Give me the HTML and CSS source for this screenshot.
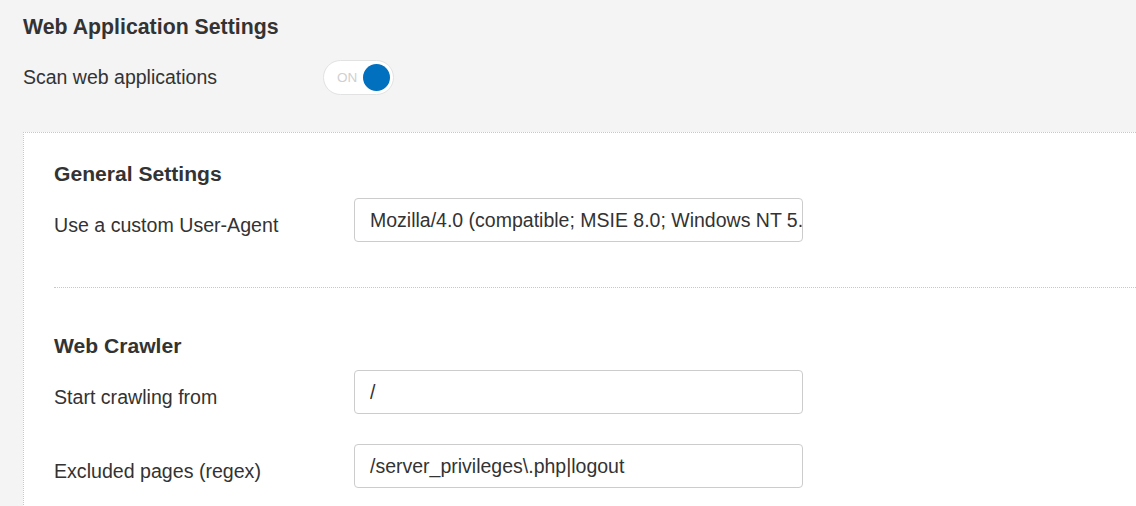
FILE: index.html
```html
<!DOCTYPE html>
<html>
<head>
<meta charset="utf-8">
<link rel="stylesheet" href="styles.css">
</head>
<body>
<div class="page">
  <h1 class="title">Web Application Settings</h1>
  <div class="toggle-row">
    <span class="label">Scan web applications</span>
    <span class="toggle"><span class="toggle-text">ON</span><span class="knob"></span></span>
  </div>
  <div class="card">
    <h2 class="section-title">General Settings</h2>
    <div class="form-row">
      <label class="field-label">Use a custom User-Agent</label>
      <input class="field" type="text" value="Mozilla/4.0 (compatible; MSIE 8.0; Windows NT 5.1; Trident/4.0)">
    </div>
    <div class="separator"></div>
    <h2 class="section-title">Web Crawler</h2>
    <div class="form-row">
      <label class="field-label">Start crawling from</label>
      <input class="field" type="text" value="/">
    </div>
    <div class="form-row spaced">
      <label class="field-label">Excluded pages (regex)</label>
      <input class="field" type="text" value="/server_privileges\.php|logout">
    </div>
  </div>
</div>
</body>
</html>
```

FILE: styles.css
```css
html, body {
  margin: 0;
  padding: 0;
  background: #f4f4f4;
  overflow: hidden;
}
body {
  font-family: "Liberation Sans", Arial, sans-serif;
  color: #333;
  width: 1136px;
  height: 506px;
}
.page {
  padding: 14px 0 0 23px;
}
.title {
  font-size: 21.3px;
  line-height: 26px;
  font-weight: bold;
  margin: 0;
}
.toggle-row {
  display: flex;
  align-items: center;
  margin-top: 19px;
  height: 36px;
}
.label {
  font-size: 19.5px;
  width: 300px;
}
.toggle {
  display: flex;
  align-items: center;
  justify-content: space-between;
  width: 69px;
  height: 33px;
  border: 1px solid #e2e2e2;
  border-radius: 18px;
  background: #fff;
  box-sizing: content-box;
  padding: 0;
}
.toggle-text {
  font-size: 13.5px;
  color: #d0d0d0;
  margin-left: 13px;
}
.knob {
  width: 27px;
  height: 27px;
  border-radius: 50%;
  background: #0070bf;
  margin-right: 3px;
}
.card {
  margin-top: 37px;
  background: #fff;
  border-top: 1px dotted #c8c8c8;
  border-left: 1px dotted #c8c8c8;
  padding: 28px 0 0 30px;
  height: 400px;
}
.section-title {
  font-size: 21.1px;
  line-height: 26px;
  font-weight: bold;
  margin: 0;
}
.form-row {
  display: flex;
  align-items: flex-start;
  margin-top: 11px;
}
.form-row.spaced {
  margin-top: 30px;
}
.field-label {
  width: 300px;
  font-size: 19.6px;
  line-height: 26px;
  padding-top: 13.5px;
}
.field {
  width: 449px;
  height: 44px;
  box-sizing: border-box;
  border: 1px solid #ccc;
  border-radius: 4px;
  padding: 0 0 0 15px;
  font-family: "Liberation Sans", Arial, sans-serif;
  font-size: 19.5px;
  color: #333;
  background: #fff;
  outline: none;
}
.separator {
  border-top: 1px dotted #c8c8c8;
  margin: 45px 0 45px 0;
}
```
